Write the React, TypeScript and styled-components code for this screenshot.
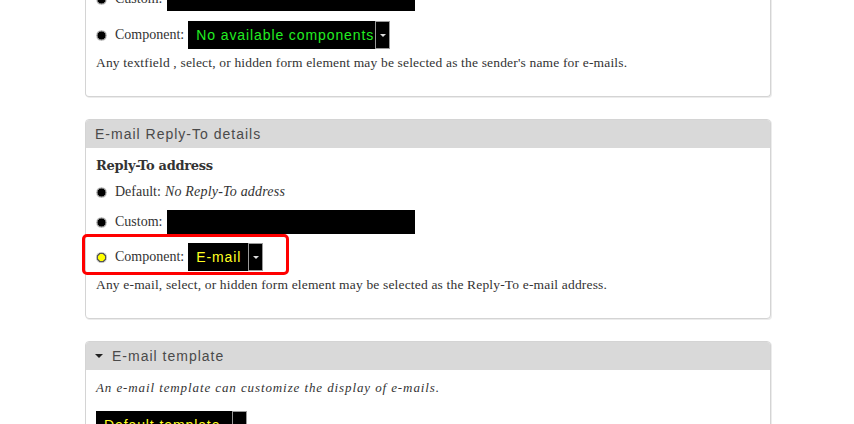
import React from "react";
import styled, { createGlobalStyle, css } from "styled-components";

const GlobalStyle = createGlobalStyle`
  html, body {
    margin: 0;
    padding: 0;
    background: #ffffff;
    overflow: hidden;
  }
  body {
    font-family: "Liberation Serif", "DejaVu Serif", serif;
    color: #333;
  }
`;

const Page = styled.div`
  width: 854px;
  height: 424px;
  overflow: hidden;
  padding-left: 85px;
  box-sizing: border-box;
`;

const Stack = styled.div`
  width: 686px;
  display: flex;
  flex-direction: column;
  gap: 22px;
  margin-top: -16px;
`;

const Fieldset = styled.div<{ cutTop?: boolean }>`
  border: 1px solid #d4d4d4;
  border-radius: 4px;
  ${({ cutTop }) =>
    cutTop &&
    css`
      border-top: none;
      border-radius: 0 0 4px 4px;
    `}
  box-shadow: 1px 1px 0 #ececec;
  background: #fff;
  display: flex;
  flex-direction: column;
`;

const Legend = styled.div`
  height: 28px;
  background: #d9d9d9;
  border-radius: 3px 3px 0 0;
  display: flex;
  align-items: center;
  padding-left: 9px;
  gap: 9px;
  font-family: "Liberation Sans", "DejaVu Sans", sans-serif;
  font-size: 14px;
  letter-spacing: 1px;
  color: #4a4a4a;
  white-space: nowrap;
`;

const Caret = styled.span`
  width: 0;
  height: 0;
  border-left: 4px solid transparent;
  border-right: 4px solid transparent;
  border-top: 4px solid #222;
`;

const Body = styled.div<{ top?: number; bottom?: number }>`
  padding: ${({ top }) => top ?? 8}px 10px ${({ bottom }) => bottom ?? 24}px 10px;
  display: flex;
  flex-direction: column;
`;

const Heading = styled.div`
  font-family: "DejaVu Serif", serif;
  font-weight: bold;
  font-size: 13px;
  color: #333;
  line-height: 20px;
  letter-spacing: -0.3px;
`;

const Row = styled.div<{ h: number; mt?: number; highlight?: boolean }>`
  position: relative;
  height: ${({ h }) => h}px;
  margin-top: ${({ mt }) => mt ?? 0}px;
  display: flex;
  align-items: center;
  font-size: 14px;
  color: #333;
  white-space: nowrap;
  ${({ highlight }) =>
    highlight &&
    css`
      &::after {
        content: "";
        position: absolute;
        left: -14px;
        top: -9px;
        width: 201px;
        height: 35px;
        border: 3px solid #ff0000;
        border-radius: 5px;
        pointer-events: none;
      }
    `}
`;

const Radio = styled.span<{ active?: boolean }>`
  width: 11px;
  height: 11px;
  border-radius: 50%;
  box-sizing: border-box;
  margin-right: 8px;
  background: ${({ active }) =>
    active
      ? "radial-gradient(circle, #ffff00 0 3.2px, #555 3.8px 4.6px, #bbb 5px 5.5px)"
      : "radial-gradient(circle, #000 0 3.6px, #8a8a8a 4.2px 4.8px, #cfcfcf 5.1px 5.5px)"};
  flex-shrink: 0;
`;

const Label = styled.span`
  margin-right: 4px;
`;

const Em = styled.em`
  font-style: italic;
  letter-spacing: 0.2px;
`;

const TextInput = styled.div`
  width: 248px;
  height: 24px;
  background: #000;
  margin-left: 1px;
`;

const Select = styled.div`
  display: flex;
  height: 28px;
  font-family: "Liberation Sans", "DejaVu Sans", sans-serif;
`;

const SelectValue = styled.div<{ color: string; w: number }>`
  width: ${({ w }) => w}px;
  box-sizing: border-box;
  background: #000;
  color: ${({ color }) => color};
  font-size: 14px;
  letter-spacing: 0.9px;
  padding-left: 8px;
  display: flex;
  align-items: center;
  white-space: nowrap;
  overflow: hidden;
`;

const SelectArrow = styled.div`
  width: 15px;
  box-sizing: border-box;
  background: #000;
  border: 1px solid #9a9a9a;
  display: flex;
  align-items: center;
  justify-content: center;
  &::before {
    content: "";
    border-left: 3px solid transparent;
    border-right: 3px solid transparent;
    border-top: 3px solid #ddd;
  }
`;

const Help = styled.div<{ mt?: number }>`
  margin-top: ${({ mt }) => mt ?? 0}px;
  font-size: 13.5px;
  line-height: 18px;
  color: #333;
  letter-spacing: 0.17px;
  white-space: nowrap;
`;

const Intro = styled.div`
  font-style: italic;
  font-size: 13px;
  line-height: 20px;
  letter-spacing: 0.9px;
  color: #333;
`;

const SelectWrap = styled.div`
  margin-top: 13px;
`;

export default function App() {
  return (
    <>
      <GlobalStyle />
      <Page>
        <Stack>
          <Fieldset cutTop>
            <Body top={3}>
              <Row h={24}>
                <Radio />
                <Label>Custom:</Label>
                <TextInput />
              </Row>
              <Row h={28} mt={10}>
                <Radio />
                <Label>Component:</Label>
                <Select>
                  <SelectValue color="#22ee22" w={187}>
                    No available components
                  </SelectValue>
                  <SelectArrow />
                </Select>
              </Row>
              <Help mt={5}>
                Any textfield , select, or hidden form element may be selected as the sender's name for e-mails.
              </Help>
            </Body>
          </Fieldset>

          <Fieldset>
            <Legend>E-mail Reply-To details</Legend>
            <Body>
              <Heading>Reply-To address</Heading>
              <Row h={24} mt={4}>
                <Radio />
                <Label>Default:</Label>
                <Em>No Reply-To address</Em>
              </Row>
              <Row h={24} mt={6}>
                <Radio />
                <Label>Custom:</Label>
                <TextInput />
              </Row>
              <Row h={28} mt={9} highlight>
                <Radio active />
                <Label>Component:</Label>
                <Select>
                  <SelectValue color="#ffff22" w={60}>
                    E-mail
                  </SelectValue>
                  <SelectArrow />
                </Select>
              </Row>
              <Help mt={5}>
                Any e-mail, select, or hidden form element may be selected as the Reply-To e-mail address.
              </Help>
            </Body>
          </Fieldset>

          <Fieldset>
            <Legend>
              <Caret />
              E-mail template
            </Legend>
            <Body>
              <Intro>An e-mail template can customize the display of e-mails.</Intro>
              <SelectWrap>
                <Select>
                  <SelectValue color="#ffff22" w={136}>
                    Default template
                  </SelectValue>
                  <SelectArrow />
                </Select>
              </SelectWrap>
            </Body>
          </Fieldset>
        </Stack>
      </Page>
    </>
  );
}
